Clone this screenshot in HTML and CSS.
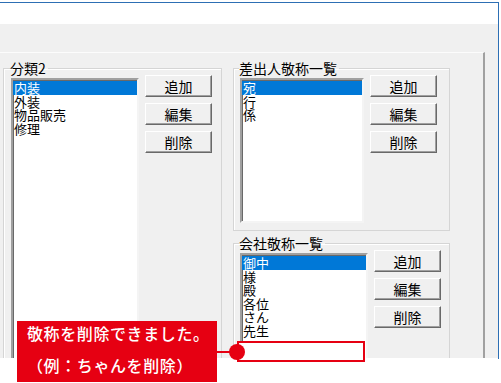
FILE: index.html
```html
<!DOCTYPE html>
<html lang="ja">
<head>
    <meta charset="UTF-8">
    <meta name="viewport" content="width=device-width, initial-scale=1.0">
    <title>敬称一覧</title>
    <link rel="stylesheet" href="styles.css">
</head>
<body>

<div class="window">
    <div class="titlebar"></div>
    <div class="client">
        <div class="panel">

            <!-- 分類2 -->
            <fieldset class="group group-tall">
                <legend>分類2</legend>
                <div class="group-body">
                    <ul class="listbox list-tall">
                        <li class="selected">内装</li>
                        <li>外装</li>
                        <li>物品販売</li>
                        <li>修理</li>
                    </ul>
                    <div class="buttons">
                        <button>追加</button>
                        <button>編集</button>
                        <button>削除</button>
                    </div>
                </div>
            </fieldset>

            <div class="col-right">
                <!-- 差出人敬称一覧 -->
                <fieldset class="group">
                    <legend>差出人敬称一覧</legend>
                    <div class="group-body">
                        <ul class="listbox list-short">
                            <li class="selected">宛</li>
                            <li>行</li>
                            <li>係</li>
                        </ul>
                        <div class="buttons">
                            <button>追加</button>
                            <button>編集</button>
                            <button>削除</button>
                        </div>
                    </div>
                </fieldset>

                <!-- 会社敬称一覧 -->
                <fieldset class="group group-second">
                    <legend>会社敬称一覧</legend>
                    <div class="group-body">
                        <ul class="listbox list-tall">
                            <li class="selected">御中</li>
                            <li>様</li>
                            <li>殿</li>
                            <li>各位</li>
                            <li>さん</li>
                            <li>先生</li>
                        </ul>
                        <div class="buttons">
                            <button>追加</button>
                            <button>編集</button>
                            <button>削除</button>
                        </div>
                    </div>
                </fieldset>
            </div>

        </div>
    </div>
</div>

<!-- annotation -->
<div class="mark-box"></div>
<div class="mark-line"></div>
<div class="mark-dot"></div>
<div class="callout">
    <span>敬称を削除できました。</span>
    <span>（例：ちゃんを削除）</span>
</div>

</body>
</html>
```

FILE: styles.css
```css
body {
    margin: 0;
    padding: 0;
    width: 501px;
    height: 383px;
    overflow: hidden;
    position: relative;
    background-color: #fff;
    font-family: "Noto Sans CJK JP", "Noto Sans", sans-serif;
}

.window {
    margin-top: 2px;
    width: 498px;
    height: 356px;
    border-top: 1px solid #2d6fb4;
    border-right: 1px solid #2d6fb4;
    overflow: hidden;
}

.titlebar {
    height: 21px;
    background-color: #fff;
}

.client {
    height: 334px;
    background-color: #f0f0f0;
    padding-top: 28px;
    box-sizing: border-box;
    overflow: hidden;
}

.panel {
    width: 480px;
    height: 400px;
    border-top: 1px solid #fcfcfc;
    border-right: 2px solid #a0a0a0;
    display: flex;
    gap: 11px;
    padding-left: 3px;
    box-sizing: content-box;
}

/* group boxes */
.group {
    margin: 7px 0 0 0;
    padding: 2px 6px 7px 6px;
    border: 1px solid #d5d5d5;
    box-shadow: inset 1px 1px #fff;
    min-width: 0;
}

.group legend {
    margin-left: -1px;
    padding: 0 2px 0 0;
    font-size: 14px;
    line-height: 16px;
    color: #000;
}

.group-tall {
    width: 204px;
    padding-left: 7px;
    height: 400px;
}

.col-right {
    display: flex;
    flex-direction: column;
    width: 217px;
}

.col-right .group {
    width: 203px;
}

.group-second {
    margin-top: 4px;
    height: 200px;
}

.group-body {
    display: flex;
    gap: 6px;
}

/* list boxes */
.listbox {
    list-style: none;
    margin: 0;
    padding: 0;
    width: 124px;
    background-color: #fff;
    border: 2px solid;
    border-color: #a0a0a0 #f4f4f4 #f4f4f4 #a0a0a0;
    box-shadow: inset 1px 1px #696969;
    font-size: 13px;
    line-height: 13.5px;
    color: #000;
}

.list-short {
    box-sizing: border-box;
    height: 145px;
}

.list-tall {
    height: 300px;
}

.listbox li {
    padding-left: 1px;
    height: 13.5px;
    white-space: nowrap;
}

.list-tall li:first-child,
.list-short li:first-child {
    margin-top: 1px;
}

.listbox li.selected {
    background-color: #0078d7;
    color: #fff;
}

/* push buttons */
.buttons {
    display: flex;
    flex-direction: column;
    gap: 6px;
    margin-top: -3px;
}

button {
    width: 67px;
    height: 22px;
    padding: 0;
    margin: 0;
    font-family: "Noto Sans CJK JP", sans-serif;
    font-size: 14px;
    line-height: 14px;
    color: #000;
    background-color: #f0f0f0;
    border: 1px solid;
    border-color: #fff #696969 #696969 #fff;
    box-shadow: inset -1px -1px #a0a0a0;
    border-radius: 0;
}

/* red annotation */
.mark-box {
    position: absolute;
    left: 237px;
    top: 341px;
    width: 124px;
    height: 17px;
    border: 2px solid #e60012;
    background-color: #fff;
}

.mark-line {
    position: absolute;
    left: 216px;
    top: 351px;
    width: 16px;
    height: 2px;
    background-color: #e60012;
}

.mark-dot {
    position: absolute;
    left: 229px;
    top: 344px;
    width: 16px;
    height: 16px;
    border-radius: 50%;
    background-color: #e60012;
}

.callout {
    position: absolute;
    left: 17px;
    top: 321px;
    width: 200px;
    height: 61px;
    padding: 2px 0 0 10px;
    box-sizing: border-box;
    background-color: #e60012;
    color: #fff;
    font-size: 16px;
    font-weight: 500;
    letter-spacing: 0.6px;
    line-height: 20px;
    display: flex;
    flex-direction: column;
    gap: 12px;
}
```
